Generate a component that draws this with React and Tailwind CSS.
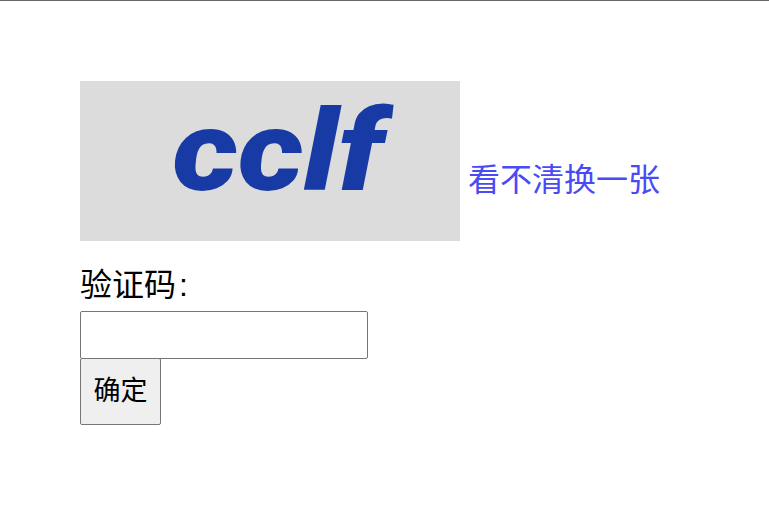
export default function App() {
  return (
    <div className="min-h-[521px] bg-white border-t border-[#666] pt-[80px] pl-[80px] text-[32px] text-black font-['Liberation_Sans','Noto_Sans_CJK_SC',sans-serif]">
      <div className="flex items-end gap-2 h-[160px]">
        <div className="w-[380px] h-[160px] bg-[#dcdcdc] flex items-center justify-center overflow-hidden shrink-0">
          <span className="inline-block ml-[17px] mb-[18px] scale-x-[1.16] text-[112px] leading-none font-black italic text-[#173aa5] font-['Roboto',sans-serif]">
            cclf
          </span>
        </div>
        <a href="#" className="mb-[38px] leading-[46px] text-[#4a4af5]">看不清换一张</a>
      </div>
      <label className="block mt-[24px] h-[46px] leading-[40px]">
        验证码<span className="ml-[3px]">:</span>
      </label>
      <input className="block w-[288px] h-[48px] bg-white border border-[#767676] rounded-[2px]" type="text" />
      <button className="block -mt-px w-[81px] h-[67px] bg-[#efefef] border border-[#767676] rounded-[2px] text-[27px] text-center">
        确定
      </button>
    </div>
  );
}
